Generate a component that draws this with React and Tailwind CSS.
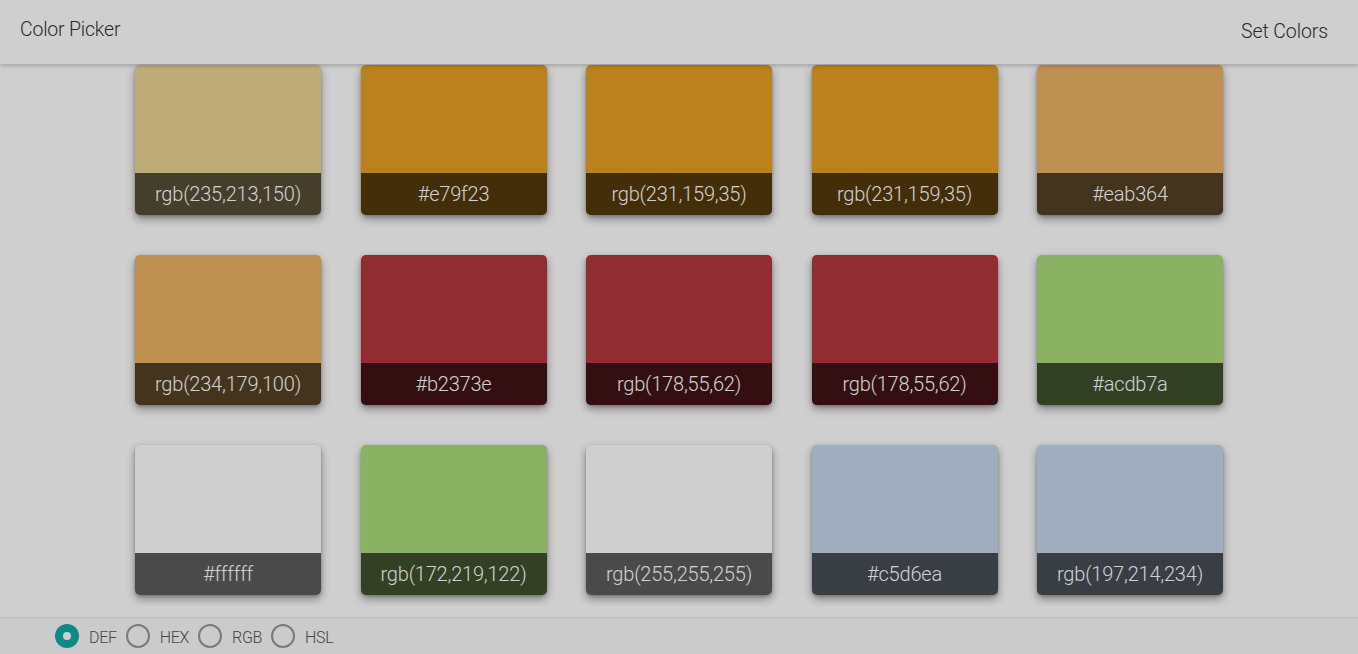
import React, { useState } from 'react';

const swatches = [
  { color: 'rgb(235,213,150)', label: 'rgb(235,213,150)' },
  { color: '#e79f23', label: '#e79f23' },
  { color: 'rgb(231,159,35)', label: 'rgb(231,159,35)' },
  { color: 'rgb(231,159,35)', label: 'rgb(231,159,35)' },
  { color: '#eab364', label: '#eab364' },
  { color: 'rgb(234,179,100)', label: 'rgb(234,179,100)' },
  { color: '#b2373e', label: '#b2373e' },
  { color: 'rgb(178,55,62)', label: 'rgb(178,55,62)' },
  { color: 'rgb(178,55,62)', label: 'rgb(178,55,62)' },
  { color: '#acdb7a', label: '#acdb7a' },
  { color: '#ffffff', label: '#ffffff' },
  { color: 'rgb(172,219,122)', label: 'rgb(172,219,122)' },
  { color: 'rgb(255,255,255)', label: 'rgb(255,255,255)' },
  { color: '#c5d6ea', label: '#c5d6ea' },
  { color: 'rgb(197,214,234)', label: 'rgb(197,214,234)' },
];

const modes = ['DEF', 'HEX', 'RGB', 'HSL'];

function Swatch({ color, label }) {
  return (
    <div
      className="w-[186px] h-[150px] rounded-[5px] flex flex-col overflow-hidden shadow-[0_4px_9px_rgba(0,0,0,0.38),0_1px_3px_rgba(0,0,0,0.2)]"
      style={{ backgroundColor: color }}
    >
      <div className="flex-1" />
      <div className="h-[42px] bg-black/[0.64] flex items-center justify-center text-white text-[20px] font-light tracking-[-0.2px]">
        {label}
      </div>
    </div>
  );
}

export default function App() {
  const [mode, setMode] = useState('DEF');

  return (
    <div className="relative h-screen flex flex-col bg-white overflow-hidden font-['Roboto',sans-serif]">
      <header className="h-16 shrink-0 flex items-center justify-between pl-5 pr-[30px] bg-white shadow-[0_2px_4px_rgba(0,0,0,0.2)] relative z-10">
        <span className="text-[19.5px] font-light text-[#333] -mt-1 tracking-[-0.2px]">Color Picker</span>
        <button className="text-[19.5px] font-light text-[#333] tracking-[-0.1px]">Set Colors</button>
      </header>

      <main className="flex-1 pt-px">
        <div className="grid grid-cols-[repeat(5,186px)] justify-center gap-x-[39.5px] gap-y-10">
          {swatches.map((s, i) => (
            <Swatch key={i} color={s.color} label={s.label} />
          ))}
        </div>
      </main>

      <footer className="h-[37px] shrink-0 bg-[#fbfbfb] border-t border-[#ececec] flex items-center pl-[55px] gap-[9px]">
        {modes.map((m) => (
          <label key={m} className="flex items-center gap-[10px] cursor-pointer" onClick={() => setMode(m)}>
            {mode === m ? (
              <span className="w-6 h-6 rounded-full bg-[#11aba5] flex items-center justify-center">
                <span className="w-2 h-2 rounded-full bg-white" />
              </span>
            ) : (
              <span className="w-6 h-6 rounded-full border-2 border-[#979797]" />
            )}
            <span className="text-[16px] font-light text-[#555] mt-[3px] tracking-[-0.3px]">{m}</span>
          </label>
        ))}
      </footer>

      <div className="absolute inset-0 bg-black/[0.19] pointer-events-none z-20" />
    </div>
  );
}
